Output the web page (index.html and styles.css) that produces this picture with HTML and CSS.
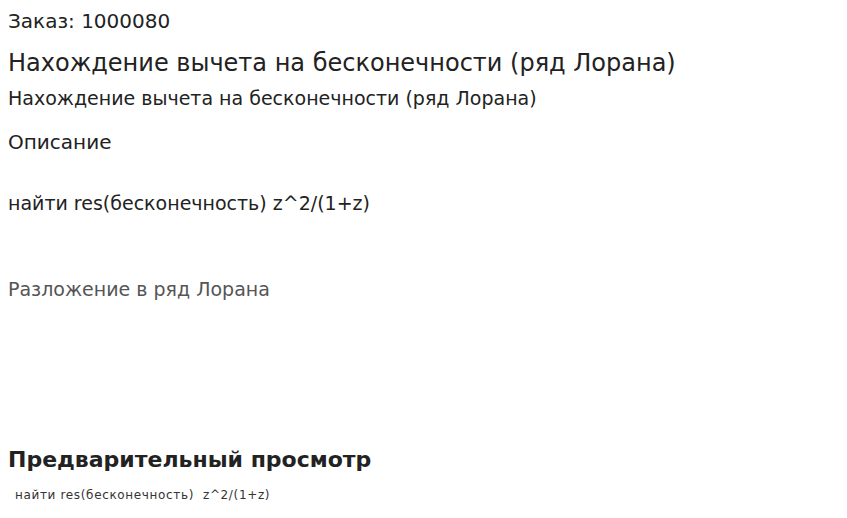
FILE: index.html
```html
<!DOCTYPE html>
<html lang="ru">
<head>
<meta charset="utf-8">
<title>Заказ: 1000080</title>
<link rel="stylesheet" href="styles.css">
</head>
<body>
<div class="page">
  <div class="order">Заказ: 1000080</div>
  <h1 class="title">Нахождение вычета на бесконечности (ряд Лорана)</h1>
  <div class="subtitle">Нахождение вычета на бесконечности (ряд Лорана)</div>
  <div class="label">Описание</div>
  <div class="desc">найти res(бесконечность) z^2/(1+z)</div>
  <div class="topic">Разложение в ряд Лорана</div>
  <h2 class="preview-head">Предварительный просмотр</h2>
  <div class="preview">найти res(бесконечность)  z^2/(1+z)</div>
</div>
</body>
</html>
```

FILE: styles.css
```css
html, body {
  margin: 0;
  padding: 0;
  background: #fff;
}

body {
  font-family: "DejaVu Sans", sans-serif;
  color: #222;
}

.page {
  display: flex;
  flex-direction: column;
  align-items: flex-start;
  padding: 9px 8px 0 8px;
}

.order {
  font-size: 20px;
  line-height: 24px;
}

.title {
  margin: 15px 0 0 0;
  font-size: 24px;
  font-weight: normal;
  line-height: 30px;
}

.subtitle {
  font-size: 19px;
  line-height: 24px;
  margin-top: 8px;
}

.label {
  font-size: 20px;
  line-height: 24px;
  margin-top: 20px;
}

.desc {
  font-size: 19px;
  line-height: 24px;
  margin-top: 37px;
}

.topic {
  font-size: 19px;
  line-height: 24px;
  margin-top: 62px;
  color: #555;
}

.preview-head {
  margin: 146px 0 0 0;
  font-size: 22px;
  font-weight: bold;
  line-height: 26px;
}

.preview {
  font-size: 12px;
  line-height: 16px;
  margin-top: 14px;
  padding-left: 7px;
  letter-spacing: 0.65px;
  white-space: pre;
  color: #333;
}
```
